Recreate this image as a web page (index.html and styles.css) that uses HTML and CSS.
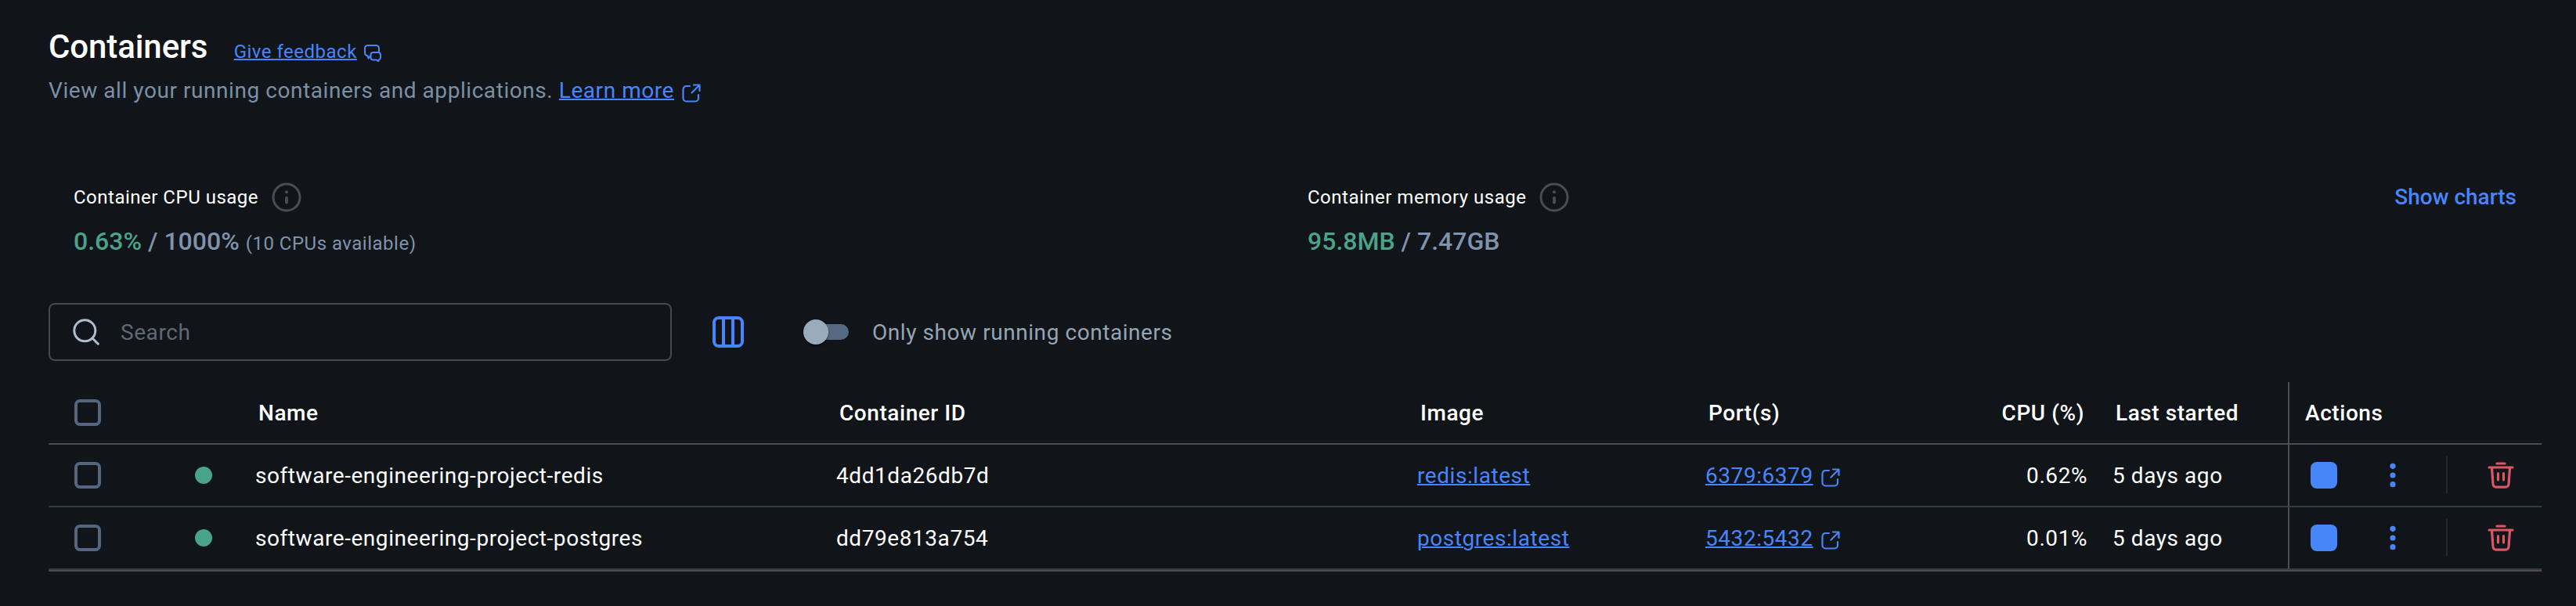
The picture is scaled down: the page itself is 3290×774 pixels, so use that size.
FILE: index.html
```html
<!DOCTYPE html>
<html lang="en">
<head>
<meta charset="utf-8">
<title>Containers</title>
<link rel="stylesheet" href="styles.css">
</head>
<body>
<svg class="defs" width="0" height="0" aria-hidden="true">
  <symbol id="external" viewBox="0 0 24 24">
    <path d="M10 3H5.500A4 4 0 0 0 1.500 7v11.500a4 4 0 0 0 4 4H17a4 4 0 0 0 4-4V14" />
    <path d="M15 1.500h7.500V9M22 2 12.500 11.500" />
  </symbol>
  <symbol id="info" viewBox="0 0 38 38">
    <circle cx="19" cy="19" r="17" fill="none" stroke="currentColor" stroke-width="3" />
    <circle cx="19" cy="12.300" r="2" fill="currentColor" />
    <path d="M19 19.800v5.600" fill="none" stroke="currentColor" stroke-width="4" stroke-linecap="round" />
  </symbol>
  <symbol id="trash" viewBox="0 0 34 34">
    <path d="M12 2h10M2 7h30M5.500 7.500 7 28.500a4 4 0 0 0 4 3.700h12a4 4 0 0 0 4-3.700L28.500 7.500M13.500 14.500v8.500M20.500 14.500v8.500" />
  </symbol>
</svg>
<main class="page">
  <header class="heading">
    <h1 class="title">Containers</h1>
    <a class="feedback"><span class="link">Give feedback</span>
      <svg class="chat" viewBox="0 0 22 22"><path d="M8 14.500 5.500 17.500 4.500 14.300A4 4 0 0 1 1 10.500V4.500A3.500 3.500 0 0 1 4.500 1h11A3.500 3.500 0 0 1 19 4.500V9M11.500 10H18a3 3 0 0 1 3 3v3.500a3 3 0 0 1-2 2.800l-.8 1.900-2.200-1.700h-4.500a3 3 0 0 1-3-3V13a3 3 0 0 1 3-3z" /></svg>
    </a>
  </header>
  <p class="subtitle">View all your running containers and applications. <a class="link">Learn more</a><svg class="ext"><use href="#external" /></svg></p>

  <section class="usage">
    <div class="stat">
      <div class="stat-label">Container CPU usage<svg class="info"><use href="#info" /></svg></div>
      <div class="stat-value"><b class="used">0.63%</b> / 1000% <span class="note">(10 CPUs available)</span></div>
    </div>
    <div class="stat">
      <div class="stat-label">Container memory usage<svg class="info"><use href="#info" /></svg></div>
      <div class="stat-value"><b class="used">95.8MB</b> / 7.47GB</div>
    </div>
    <a class="show-charts">Show charts</a>
  </section>

  <section class="toolbar">
    <div class="search">
      <svg class="search-icon" viewBox="0 0 34 34"><circle cx="15.300" cy="15.300" r="13.500" /><path d="m25 25 7.300 7.300" /></svg>
      <span>Search</span>
    </div>
    <svg class="columns" viewBox="0 0 40 40"><rect x="2" y="2" width="36" height="36" rx="6" /><path d="M14 2v36M26 2v36" /></svg>
    <div class="switch"><span class="thumb"></span></div>
    <span class="switch-label">Only show running containers</span>
  </section>

  <section class="table">
    <div class="row head">
      <div class="cell check"><span class="checkbox"></span></div>
      <div class="cell"></div>
      <div class="cell">Name</div>
      <div class="cell">Container ID</div>
      <div class="cell">Image</div>
      <div class="cell">Port(s)</div>
      <div class="cell cpu">CPU (%)</div>
      <div class="cell">Last started</div>
      <div class="cell actions">Actions</div>
    </div>
    <div class="row">
      <div class="cell check"><span class="checkbox"></span></div>
      <div class="cell"><span class="status"></span></div>
      <div class="cell">software-engineering-project-redis</div>
      <div class="cell">4dd1da26db7d</div>
      <div class="cell"><a class="link">redis:latest</a></div>
      <div class="cell"><a class="link">6379:6379</a><svg class="ext"><use href="#external" /></svg></div>
      <div class="cell cpu">0.62%</div>
      <div class="cell">5 days ago</div>
      <div class="cell actions">
        <span class="stop"></span>
        <svg class="more" viewBox="0 0 8 32"><circle cx="4" cy="4.300" r="3.600" /><circle cx="4" cy="16" r="3.600" /><circle cx="4" cy="27.700" r="3.600" /></svg>
        <span class="divider"></span>
        <svg class="trash"><use href="#trash" /></svg>
      </div>
    </div>
    <div class="row">
      <div class="cell check"><span class="checkbox"></span></div>
      <div class="cell"><span class="status"></span></div>
      <div class="cell">software-engineering-project-postgres</div>
      <div class="cell">dd79e813a754</div>
      <div class="cell"><a class="link">postgres:latest</a></div>
      <div class="cell"><a class="link">5432:5432</a><svg class="ext"><use href="#external" /></svg></div>
      <div class="cell cpu">0.01%</div>
      <div class="cell">5 days ago</div>
      <div class="cell actions">
        <span class="stop"></span>
        <svg class="more" viewBox="0 0 8 32"><circle cx="4" cy="4.300" r="3.600" /><circle cx="4" cy="16" r="3.600" /><circle cx="4" cy="27.700" r="3.600" /></svg>
        <span class="divider"></span>
        <svg class="trash"><use href="#trash" /></svg>
      </div>
    </div>
  </section>
</main>
</body>
</html>
```
FILE: styles.css
```css
* { box-sizing: border-box; }
body {
  margin: 0;
  background: #111419;
  color: #fff;
  font-family: Roboto, "Liberation Sans", sans-serif;
  font-size: 28px;
  letter-spacing: 0.56px;
}
svg { display: block; flex: none; fill: none; stroke-linecap: round; stroke-linejoin: round; }
.defs { position: absolute; }
.page { height: 774px; padding: 36px 44px 0 62px; overflow: hidden; }
.link { color: #4785fa; text-decoration: underline; text-decoration-thickness: 2px; }

.heading { display: flex; height: 48px; }
.title { margin: 0; width: 236.700px; font-size: 42px; font-weight: 500; line-height: 48px; letter-spacing: -0.1px; }
.feedback { display: flex; font-size: 24px; line-height: 60px; letter-spacing: 0.5px; }
.chat { width: 22px; height: 22px; margin: 21px 0 0 9px; stroke: #4785fa; stroke-width: 2; }
.subtitle { display: flex; margin: 12px 0 0; height: 40px; line-height: 40px; color: #7990a6; white-space: pre; }
.ext { width: 24px; height: 24px; stroke: #4785fa; stroke-width: 2.200; }
.subtitle .ext { margin: 11px 0 0 10px; }

.usage { display: grid; grid-template-columns: 1576px 1fr auto; margin-top: 96px; padding: 0 32px; height: 155px; }
.stat-label { display: flex; align-items: center; gap: 17px; height: 40px; font-size: 24px; letter-spacing: 0.5px; }
.info { width: 38px; height: 38px; color: #4a4c50; }
.stat-value { margin-top: 16px; line-height: 40px; font-size: 32px; font-weight: 500; letter-spacing: 0; color: #7f93ac; }
.used { font-weight: 500; color: #4aa48c; }
.note { font-size: 24px; font-weight: 400; letter-spacing: 0.5px; }
.show-charts { height: 40px; line-height: 40px; font-weight: 500; letter-spacing: 0; color: #4785fa; }

.toolbar { display: flex; align-items: center; height: 74px; }
.search { display: flex; align-items: center; gap: 27px; width: 796px; height: 74px; padding-left: 29px; border: 2px solid #46484b; border-radius: 8px; color: #5f6974; }
.search-icon { width: 34px; height: 34px; stroke: #adbecd; stroke-width: 3; }
.columns { width: 40px; height: 40px; margin-left: 52px; stroke: #4785fa; stroke-width: 4; }
.switch { width: 52px; height: 20px; margin-left: 82px; border-radius: 10px; background: #556a82; }
.thumb { display: block; width: 32px; height: 32px; margin: -6px 0 0 -6px; border-radius: 50%; background: #9aabbb; box-shadow: 0 2px 3px rgba(0, 0, 0, 0.4); }
.switch-label { margin-left: 30px; color: #94a5b5; }

.table { margin-top: 27px; border-bottom: 2px solid #4e4e50; }
.row { display: grid; grid-template-columns: 187px 77px 742px 742px 368px 262px 258px 224px 1fr; height: 80px; border-bottom: 2px solid #2f3d4a; }
.row.head { border-bottom-color: #4e4e50; font-weight: 500; }
.cell { display: flex; align-items: center; min-width: 0; }
.check { padding-left: 33px; }
.head .cell:not(.check) { padding-left: 4px; }
.checkbox { width: 34px; height: 34px; border: 4px solid #53687f; border-radius: 7px; }
.status { width: 22px; height: 22px; border-radius: 50%; background: #4aa48c; }
.cell .ext { margin: 5px 0 0 10px; }
.cpu { justify-content: flex-end; padding-right: 32px; }
.head .cpu { padding-right: 36px; }
.actions { padding-left: 27px; border-left: 2px solid #4e4e50; }
.head .actions.cell { padding-left: 20px; }
.stop { width: 34px; height: 34px; border-radius: 8px; background: #4785fa; }
.more { width: 8px; height: 32px; margin-left: 67px; fill: #4785fa; }
.divider { width: 2px; height: 48px; margin-left: 64px; background: #24272c; }
.trash { width: 34px; height: 34px; margin-left: 51px; stroke: #d75965; stroke-width: 3.200; }
```
